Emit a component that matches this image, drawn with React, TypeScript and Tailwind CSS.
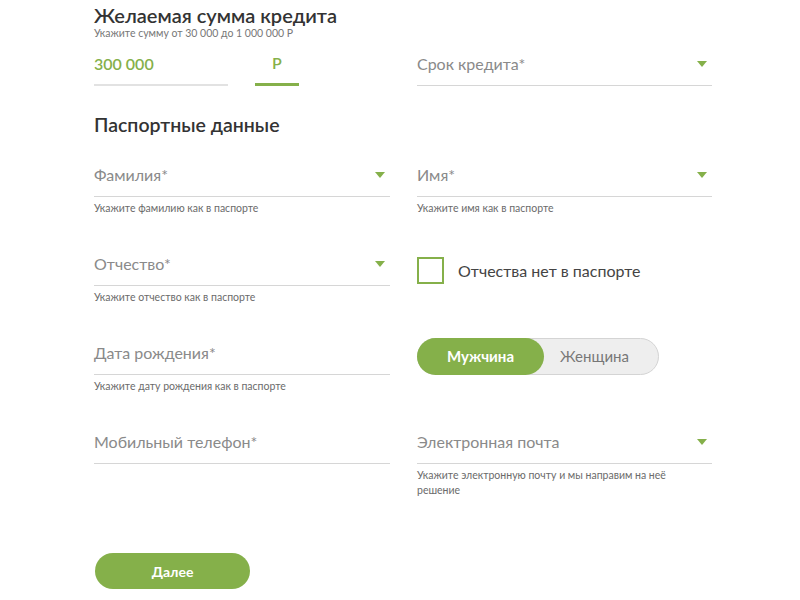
import React from "react";

const GREEN = "text-[#85b04a]";

function Caret() {
  return (
    <svg viewBox="0 0 10 6" className="h-[6px] w-[10px] shrink-0" aria-hidden>
      <path d="M0 0h10L5 6z" fill="#85b04a" />
    </svg>
  );
}

type FieldProps = {
  label: string;
  hint?: string;
  caret?: boolean;
  hintClass?: string;
};

function Field({ label, hint, caret, hintClass = "" }: FieldProps) {
  return (
    <div>
      <div className="flex h-[44px] items-center justify-between border-b border-[#d6d6d6] pr-[5px]">
        <span className="text-[16px] text-[#8a8a8a]">{label}</span>
        {caret && <Caret />}
      </div>
      {hint && (
        <p className={`mt-[4px] text-[10.5px] leading-[15px] text-[#6b6b6b] ${hintClass}`}>
          {hint}
        </p>
      )}
    </div>
  );
}

export default function App() {
  return (
    <div
      className="min-h-[600px] w-[800px] bg-white pl-[94px] pt-[3px]"
      style={{ fontFamily: "Lato, 'Open Sans', sans-serif" }}
    >
      <div className="w-[618px]">
        <h1 className="text-[20px] font-semibold leading-[24px] text-[#333]">
          Желаемая сумма кредита
        </h1>
        <p className="text-[10.5px] leading-[12px] text-[#777]">
          Укажите сумму от 30 000 до 1 000 000 Р
        </p>

        <div className="mt-[3px] grid grid-cols-[296px_295px] gap-x-[27px]">
          <div className="flex items-end">
            <div
              className={`flex h-[43px] w-[134px] items-center border-b-2 border-[#e2e2e2] text-[16px] font-semibold ${GREEN}`}
            >
              300 000
            </div>
            <div
              className={`ml-[27px] flex h-[44px] w-[44px] items-center justify-center border-b-[3px] border-[#85b04a] text-[16px] font-semibold ${GREEN}`}
            >
              Р
            </div>
          </div>
          <Field label="Срок кредита*" caret />
        </div>

        <h2 className="mt-[27px] text-[19.5px] font-semibold leading-[24px] text-[#333]">
          Паспортные данные
        </h2>

        <div className="mt-[16px] grid grid-cols-[296px_295px] gap-x-[27px]">
          <div className="h-[89px]">
            <Field label="Фамилия*" hint="Укажите фамилию как в паспорте" caret />
          </div>
          <div className="h-[89px]">
            <Field label="Имя*" hint="Укажите имя как в паспорте" caret />
          </div>

          <div className="h-[89px]">
            <Field label="Отчество*" hint="Укажите отчество как в паспорте" caret />
          </div>
          <div className="h-[89px] pt-[15px]">
            <label className="flex items-center gap-[14px]">
              <span className="h-[27px] w-[27px] border-2 border-[#85b04a] bg-white" />
              <span className="text-[16px] text-[#444]">Отчества нет в паспорте</span>
            </label>
          </div>

          <div className="h-[89px]">
            <Field label="Дата рождения*" hint="Укажите дату рождения как в паспорте" />
          </div>
          <div className="h-[89px] pt-[7px]">
            <div className="flex h-[37px] w-[242px] rounded-full border border-[#d4d4d4] bg-[#eeeeee]">
              <button
                type="button"
                className="-m-px w-[127px] rounded-full bg-[#85b04a] text-[15px] font-bold text-white"
              >
                Мужчина
              </button>
              <button type="button" className="flex-1 pr-[12px] text-[15px] text-[#777]">
                Женщина
              </button>
            </div>
          </div>

          <div>
            <Field label="Мобильный телефон*" />
          </div>
          <div>
            <Field
              label="Электронная почта"
              caret
              hintClass="max-w-[265px]"
              hint="Укажите электронную почту и мы направим на неё решение"
            />
          </div>
        </div>

        <button
          type="button"
          className="ml-px mt-[55px] h-[36px] w-[155px] rounded-full bg-[#85b04a] text-[14px] font-bold text-white"
        >
          Далее
        </button>
      </div>
    </div>
  );
}
